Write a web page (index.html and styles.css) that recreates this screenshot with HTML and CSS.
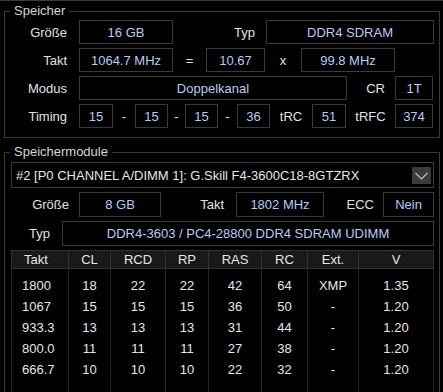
FILE: index.html
```html
<!DOCTYPE html>
<html lang="de">
<head>
    <meta charset="UTF-8">
    <title>Speicher</title>
    <link rel="stylesheet" href="styles.css">
</head>
<body>
    <div class="page">
        <!-- Gruppe: Speicher -->
        <fieldset class="group group-mem">
            <legend>Speicher</legend>
            <div class="rows">
                <div class="row">
                    <span class="lbl lbl-main">Größe</span>
                    <span class="field w94">16 GB</span>
                    <span class="lbl lbl-typ">Typ</span>
                    <span class="field w168">DDR4 SDRAM</span>
                </div>
                <div class="row">
                    <span class="lbl lbl-main">Takt</span>
                    <span class="field w94">1064.7 MHz</span>
                    <span class="sep w33">=</span>
                    <span class="field w59">10.67</span>
                    <span class="sep w36">x</span>
                    <span class="field w94">99.8 MHz</span>
                </div>
                <div class="row">
                    <span class="lbl lbl-main">Modus</span>
                    <span class="field w268">Doppelkanal</span>
                    <span class="lbl lbl-cr">CR</span>
                    <span class="field w38">1T</span>
                </div>
                <div class="row">
                    <span class="lbl lbl-main">Timing</span>
                    <span class="field w34">15</span>
                    <span class="sep w22">-</span>
                    <span class="field w33">15</span>
                    <span class="sep w17">-</span>
                    <span class="field w33">15</span>
                    <span class="sep w19">-</span>
                    <span class="field w33">36</span>
                    <span class="sep w42">tRC</span>
                    <span class="field w34">51</span>
                    <span class="sep w49">tRFC</span>
                    <span class="field w38">374</span>
                </div>
            </div>
        </fieldset>

        <!-- Gruppe: Speichermodule -->
        <fieldset class="group group-mod">
            <legend>Speichermodule</legend>
            <div class="rows rows-mod">
                <div class="select">
                    <span class="select-text">#2 [P0 CHANNEL A/DIMM 1]: G.Skill F4-3600C18-8GTZRX</span>
                    <span class="select-btn">
                        <svg width="19" height="17" viewBox="0 0 19 17">
                            <path d="M3.5 6 L9.5 12 L15.5 6" fill="none" stroke="#bdbdbd" stroke-width="1.2"/>
                        </svg>
                    </span>
                </div>
                <div class="row row-mod">
                    <span class="lbl lbl-size">Größe</span>
                    <span class="field w82">8 GB</span>
                    <span class="lbl lbl-takt">Takt</span>
                    <span class="field w88">1802 MHz</span>
                    <span class="lbl lbl-ecc">ECC</span>
                    <span class="field w51">Nein</span>
                </div>
                <div class="row row-mod">
                    <span class="lbl lbl-mtyp">Typ</span>
                    <span class="field w372">DDR4-3603 / PC4-28800 DDR4 SDRAM UDIMM</span>
                </div>

                <table class="timings">
                    <colgroup>
                        <col class="c57"><col class="c42"><col class="c55"><col class="c43">
                        <col class="c53"><col class="c46"><col class="c51"><col class="c75">
                    </colgroup>
                    <thead>
                        <tr>
                            <th class="first">Takt</th><th>CL</th><th>RCD</th><th>RP</th>
                            <th>RAS</th><th>RC</th><th>Ext.</th><th>V</th>
                        </tr>
                    </thead>
                    <tbody>
                        <tr>
                            <td class="first">1800</td><td>18</td><td>22</td><td>22</td>
                            <td>42</td><td>64</td><td>XMP</td><td>1.35</td>
                        </tr>
                        <tr>
                            <td class="first">1067</td><td>15</td><td>15</td><td>15</td>
                            <td>36</td><td>50</td><td>-</td><td>1.20</td>
                        </tr>
                        <tr>
                            <td class="first">933.3</td><td>13</td><td>13</td><td>13</td>
                            <td>31</td><td>44</td><td>-</td><td>1.20</td>
                        </tr>
                        <tr>
                            <td class="first">800.0</td><td>11</td><td>11</td><td>11</td>
                            <td>27</td><td>38</td><td>-</td><td>1.20</td>
                        </tr>
                        <tr>
                            <td class="first">666.7</td><td>10</td><td>10</td><td>10</td>
                            <td>22</td><td>32</td><td>-</td><td>1.20</td>
                        </tr>
                        <tr class="filler">
                            <td></td><td></td><td></td><td></td><td></td><td></td><td></td><td></td>
                        </tr>
                    </tbody>
                </table>
            </div>
        </fieldset>
    </div>
</body>
</html>
```

FILE: styles.css
```css
/* Grundlayout */
html, body { margin: 0; padding: 0; background: #000; }
body { font-family: "Liberation Sans", Arial, sans-serif; font-size: 13px; color: #e0e0e0; overflow: hidden; }
.page { height: 392px; border-top: 1px solid #3a3a3a; box-sizing: border-box; overflow: hidden; }

/* Gruppenrahmen */
.group { margin: 0 0 0 4px; padding: 0; width: 436px; box-sizing: border-box; border: 1px solid #3a3a3a; min-width: 0; }
.group legend { margin-left: 5px; padding: 0 4px; line-height: 16px; color: #d6d6d6; }
.group-mem { margin-top: 2px; padding-bottom: 9px; }
.group-mod { margin-top: 6px; height: 260px; }

.rows { display: flex; flex-direction: column; gap: 4px; padding-top: 1px; }
.rows-mod { padding-top: 2px; padding-left: 6px; }

.row { display: flex; align-items: center; height: 24px; }
.row-mod { height: 25px; }

/* Beschriftungen */
.lbl { box-sizing: border-box; text-align: right; white-space: nowrap; }
.lbl-main { width: 74px; padding-right: 12px; }
.lbl-typ { width: 93px; padding-right: 11px; }
.lbl-cr { width: 48px; padding-right: 10px; }
.lbl-size { width: 68px; padding-right: 10px; }
.lbl-takt { width: 75px; padding-right: 12px; }
.lbl-ecc { width: 59px; padding-right: 9px; }
.lbl-mtyp { width: 51px; padding-right: 12px; }

.sep { text-align: center; white-space: nowrap; }

/* Wertfelder */
.field {
    box-sizing: border-box; height: 100%; border: 1px solid #3a3a3a;
    display: flex; align-items: center; justify-content: center;
    color: #b9cbf4; white-space: nowrap;
}

.w17 { width: 17px; } .w19 { width: 19px; } .w22 { width: 22px; }
.w33 { width: 33px; } .w34 { width: 34px; } .w36 { width: 36px; }
.w38 { width: 38px; } .w42 { width: 42px; } .w49 { width: 49px; }
.w51 { width: 51px; } .w59 { width: 59px; } .w82 { width: 82px; }
.w88 { width: 88px; } .w94 { width: 94px; } .w168 { width: 168px; }
.w268 { width: 268px; } .w372 { width: 372px; }

/* Auswahlfeld */
.select {
    box-sizing: border-box; width: 423px; height: 26px; border: 1px solid #3a3a3a;
    display: flex; align-items: center; padding-left: 4px; color: #e6e6e6;
}
.select-text { flex: 1; white-space: nowrap; }
.select-btn { width: 19px; height: 17px; background: #3b3b3b; margin-right: 2px; display: flex; }

/* Timing-Tabelle */
.timings { width: 422px; border-collapse: collapse; table-layout: fixed; color: #e6e6e6; }
.c57 { width: 57px; } .c42 { width: 42px; } .c55 { width: 55px; } .c43 { width: 43px; }
.c53 { width: 53px; } .c46 { width: 46px; } .c51 { width: 51px; } .c75 { width: 75px; }
.timings th { height: 17px; padding: 0; font-weight: normal; background: #191919; border: 1px solid #333; text-align: center; }
.timings td { height: 21px; padding: 0; text-align: center; border-left: 1px solid #262626; border-right: 1px solid #262626; }
.timings tbody tr:first-child td { height: 21px; padding-top: 6px; }
.timings .first { text-align: left; padding-left: 10px; }
.timings th.first { padding-left: 12px; }
.timings .filler td { height: 20px; }
```
